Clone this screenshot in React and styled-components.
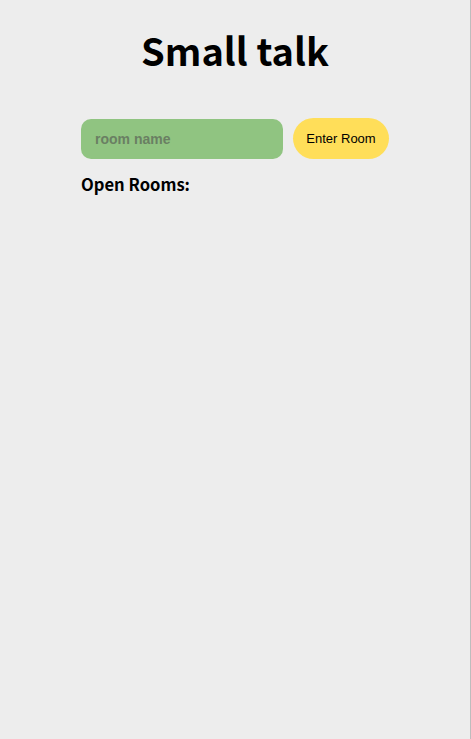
import React, { useState } from 'react';
import styled, { createGlobalStyle } from 'styled-components';

const GlobalStyle = createGlobalStyle`
  html, body {
    margin: 0;
    padding: 0;
    height: 100%;
  }
  body {
    background: #ededed;
    font-family: "Noto Sans CJK KR", "Noto Sans", sans-serif;
  }
  #root {
    min-height: 100%;
  }
`;

const Page = styled.div`
  min-height: 739px;
  box-sizing: border-box;
  border-right: 1px solid #bdbdbd;
  display: flex;
  flex-direction: column;
  align-items: center;
`;

const Title = styled.h1`
  margin: 24px 0 0;
  font-size: 38px;
  font-weight: 700;
  line-height: 52px;
  color: #000;
`;

const Lobby = styled.div`
  margin-top: 42px;
  width: 308px;
  display: flex;
  flex-direction: column;
`;

const Form = styled.form`
  display: flex;
  align-items: center;
  gap: 10px;
`;

const RoomInput = styled.input`
  width: 202px;
  height: 40px;
  box-sizing: border-box;
  border: none;
  border-radius: 10px;
  background: #90c481;
  padding: 0 14px;
  font-family: "Liberation Sans", Arial, sans-serif;
  font-size: 14px;
  font-weight: 700;
  color: #333;
  outline: none;
  &::placeholder {
    color: #6a7f63;
  }
`;

const EnterButton = styled.button`
  width: 96px;
  height: 41px;
  border: none;
  border-radius: 21px;
  background: #ffde59;
  font-family: "Liberation Sans", Arial, sans-serif;
  font-size: 13px;
  color: #000;
  cursor: pointer;
`;

const SectionTitle = styled.h3`
  margin: 14px 0 0;
  font-size: 16.6px;
  font-weight: 700;
  line-height: 22px;
  color: #000;
`;

const RoomList = styled.ul`
  margin: 0;
  padding: 0;
  list-style: none;
`;

export default function App() {
  const [name, setName] = useState('');
  return (
    <>
      <GlobalStyle />
      <Page>
        <Title>Small talk</Title>
        <Lobby>
          <Form onSubmit={e => e.preventDefault()}>
            <RoomInput placeholder="room name" value={name} onChange={e => setName(e.target.value)} />
            <EnterButton type="submit">Enter Room</EnterButton>
          </Form>
          <SectionTitle>Open Rooms:</SectionTitle>
          <RoomList />
        </Lobby>
      </Page>
    </>
  );
}
